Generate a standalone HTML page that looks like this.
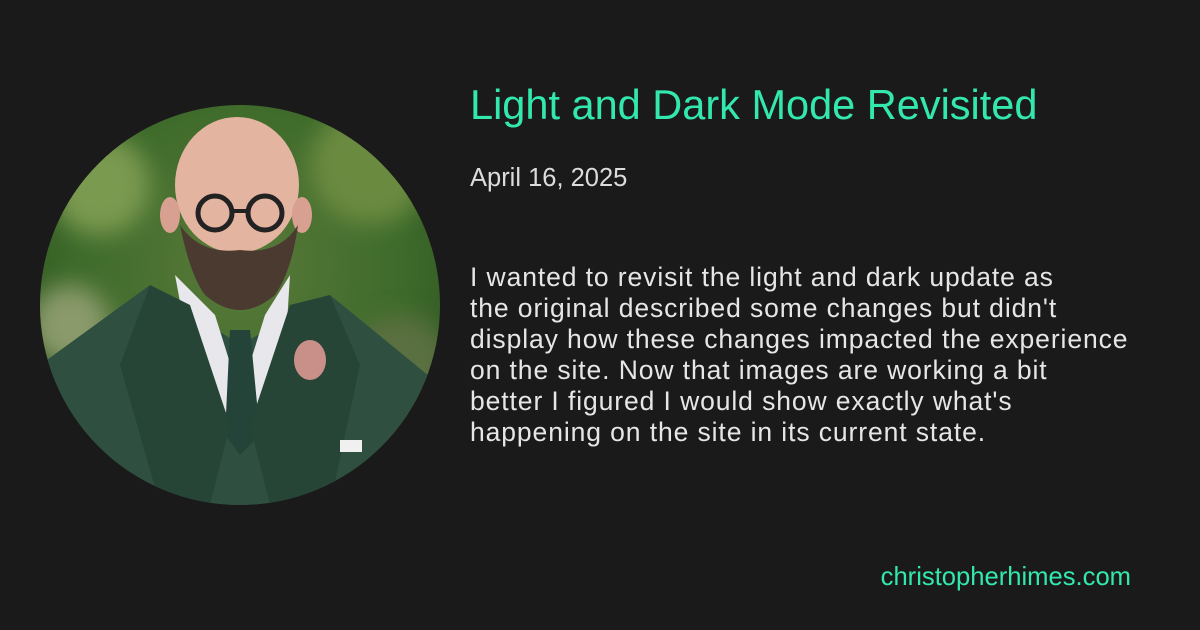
<!DOCTYPE html>
<html><head><meta charset="utf-8"><style>
html,body{margin:0;padding:0}
body{width:1200px;height:630px;background:#1b1a1b;position:relative;overflow:hidden;font-family:"Liberation Sans",Arial,sans-serif}
.t{position:absolute;left:470px;top:81px;font-size:41.5px;color:#33e8ad;white-space:nowrap}
.d{position:absolute;left:470px;top:164px;font-size:25.5px;color:#dcdcdc}
.p{position:absolute;left:470px;top:262px;font-size:26.5px;letter-spacing:0.9px;line-height:31px;color:#e6e6e6;width:720px;white-space:nowrap}
.u{position:absolute;right:69px;top:563px;font-size:25.6px;color:#33e8ad}
svg{position:absolute;left:40px;top:105px}
</style></head><body>
<svg width="400" height="400" viewBox="0 0 400 400">
<defs>
<clipPath id="c"><circle cx="200" cy="200" r="200"/></clipPath>
<radialGradient id="bg" cx="0.5" cy="0.4" r="0.7"><stop offset="0" stop-color="#5a7a3a"/><stop offset="0.6" stop-color="#3d6a2a"/><stop offset="1" stop-color="#2a4a20"/></radialGradient>
<filter id="b"><feGaussianBlur stdDeviation="12"/></filter>
</defs>
<g clip-path="url(#c)">
<rect width="400" height="400" fill="url(#bg)"/>
<g filter="url(#b)">
<circle cx="60" cy="80" r="50" fill="#7a9a50"/>
<circle cx="330" cy="60" r="60" fill="#6a8a40"/>
<circle cx="360" cy="260" r="50" fill="#5a7040"/>
<circle cx="30" cy="220" r="40" fill="#8a9a6a"/>
<circle cx="380" cy="330" r="30" fill="#c08040"/>
</g>
<path d="M0 260 L110 180 L200 240 L290 190 L400 280 L400 400 L0 400Z" fill="#2f4f40"/>
<path d="M135 170 L175 210 L200 290 L225 210 L250 170 L245 250 L200 330 L150 250Z" fill="#e8e8ec"/>
<path d="M190 225 L210 225 L220 330 L200 350 L185 330Z" fill="#24443a"/>
<path d="M110 180 L150 200 L190 320 L170 400 L120 400 L80 260Z" fill="#264536"/>
<path d="M290 190 L250 200 L210 320 L230 400 L290 400 L320 260Z" fill="#264536"/>
<ellipse cx="197" cy="80" rx="62" ry="68" fill="#e3b4a0"/>
<ellipse cx="130" cy="110" rx="10" ry="18" fill="#d8a090"/>
<ellipse cx="262" cy="110" rx="10" ry="18" fill="#d8a090"/>
<path d="M140 120 Q150 170 165 190 Q200 220 235 190 Q252 165 258 120 Q240 150 200 145 Q160 150 140 120Z" fill="#4a3a30"/>
<circle cx="175" cy="108" r="17" fill="none" stroke="#222" stroke-width="5"/>
<circle cx="225" cy="108" r="17" fill="none" stroke="#222" stroke-width="5"/>
<line x1="192" y1="106" x2="208" y2="106" stroke="#222" stroke-width="4"/>
<ellipse cx="270" cy="255" rx="16" ry="20" fill="#c9908a"/>
<rect x="300" y="335" width="22" height="12" fill="#f0f0f0"/>
</g>
</svg>
<div class="t">Light and Dark Mode Revisited</div>
<div class="d">April 16, 2025</div>
<div class="p">I wanted to revisit the light and dark update as<br>the original described some changes but didn't<br>display how these changes impacted the experience<br>on the site. Now that images are working a bit<br>better I figured I would show exactly what's<br>happening on the site in its current state.</div>
<div class="u">christopherhimes.com</div>
</body></html>
